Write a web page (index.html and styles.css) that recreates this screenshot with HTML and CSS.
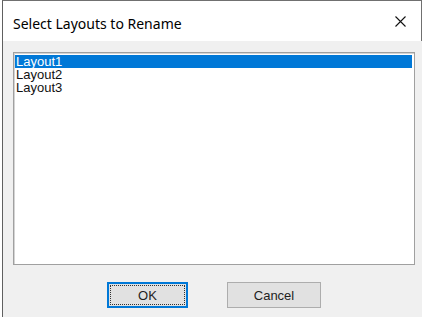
FILE: index.html
```html
<!DOCTYPE html>
<html>
<head>
    <meta charset="UTF-8">
    <meta name="viewport" content="width=device-width, initial-scale=1.0">
    <title>Select Layouts to Rename</title>
    <link rel="stylesheet" href="styles.css">
</head>
<body>
    <div class="dialog">
      <div class="title-bar">
        <span class="title-text">Select Layouts to Rename</span>
        <button class="close-button" aria-label="Close">
          <svg width="11" height="11" viewBox="0 0 11 11">
            <path d="M0.5 0.5 L10.5 10.5 M10.5 0.5 L0.5 10.5" stroke="#111" stroke-width="1.1" fill="none"/>
          </svg>
        </button>
      </div>
      <div class="dialog-body">
        <div class="listbox">
          <div class="list-item selected">Layout1</div>
          <div class="list-item">Layout2</div>
          <div class="list-item">Layout3</div>
        </div>
        <div class="button-row">
          <button class="win-button ok"><span class="focus-rect">OK</span></button>
          <button class="win-button cancel">Cancel</button>
        </div>
      </div>
    </div>
</body>
</html>
```

FILE: styles.css
```css
html, body {
  margin: 0;
  padding: 0;
  background: #fff;
}

.dialog {
  margin-left: 2px;
  width: 419px;
  height: 316px;
  border-top: 1px solid #707070;
  border-left: 1px solid #606060;
  display: flex;
  flex-direction: column;
  background: #f0f0f0;
  font-family: "Liberation Sans", Arial, sans-serif;
}

.title-bar {
  height: 40px;
  background: #fff;
  display: flex;
  align-items: center;
  justify-content: space-between;
  padding: 0 15px 0 10px;
  box-sizing: border-box;
  border-right: 1px solid #707070;
}

.title-text {
  font-family: "Noto Sans", "Open Sans", sans-serif;
  font-size: 14px;
  color: #000;
  padding-top: 4px;
}

.close-button {
  background: none;
  border: none;
  padding: 0;
  width: 11px;
  height: 11px;
  display: flex;
}

.dialog-body {
  flex: 1;
  padding: 11px 7px 0 10px;
  display: flex;
  flex-direction: column;
}

.listbox {
  width: 402px;
  height: 213px;
  box-sizing: border-box;
  background: #fff;
  border: 1px solid #a0a0a0;
  box-shadow: inset 1px 1px 0 #d4d4d4;
  padding: 2px 2px 0 1px;
}

.list-item {
  font-size: 13px;
  line-height: 13px;
  height: 13px;
  padding-left: 1px;
  color: #111;
}

.list-item.selected {
  background: #0078d7;
  color: #fff;
}

.button-row {
  display: flex;
  justify-content: center;
  gap: 39px;
  margin-top: 17px;
}

.win-button {
  height: 26px;
  box-sizing: border-box;
  background: #e1e1e1;
  border: 1px solid #adadad;
  font-family: "Liberation Sans", Arial, sans-serif;
  font-size: 13px;
  color: #1e1e1e;
  padding: 0;
}

.win-button.ok {
  width: 81px;
  border: 2px solid #0078d7;
  padding: 1px;
  display: flex;
}

.focus-rect {
  flex: 1;
  border: 1px dotted #333;
  display: flex;
  align-items: center;
  justify-content: center;
}

.win-button.cancel {
  width: 94px;
}
```
